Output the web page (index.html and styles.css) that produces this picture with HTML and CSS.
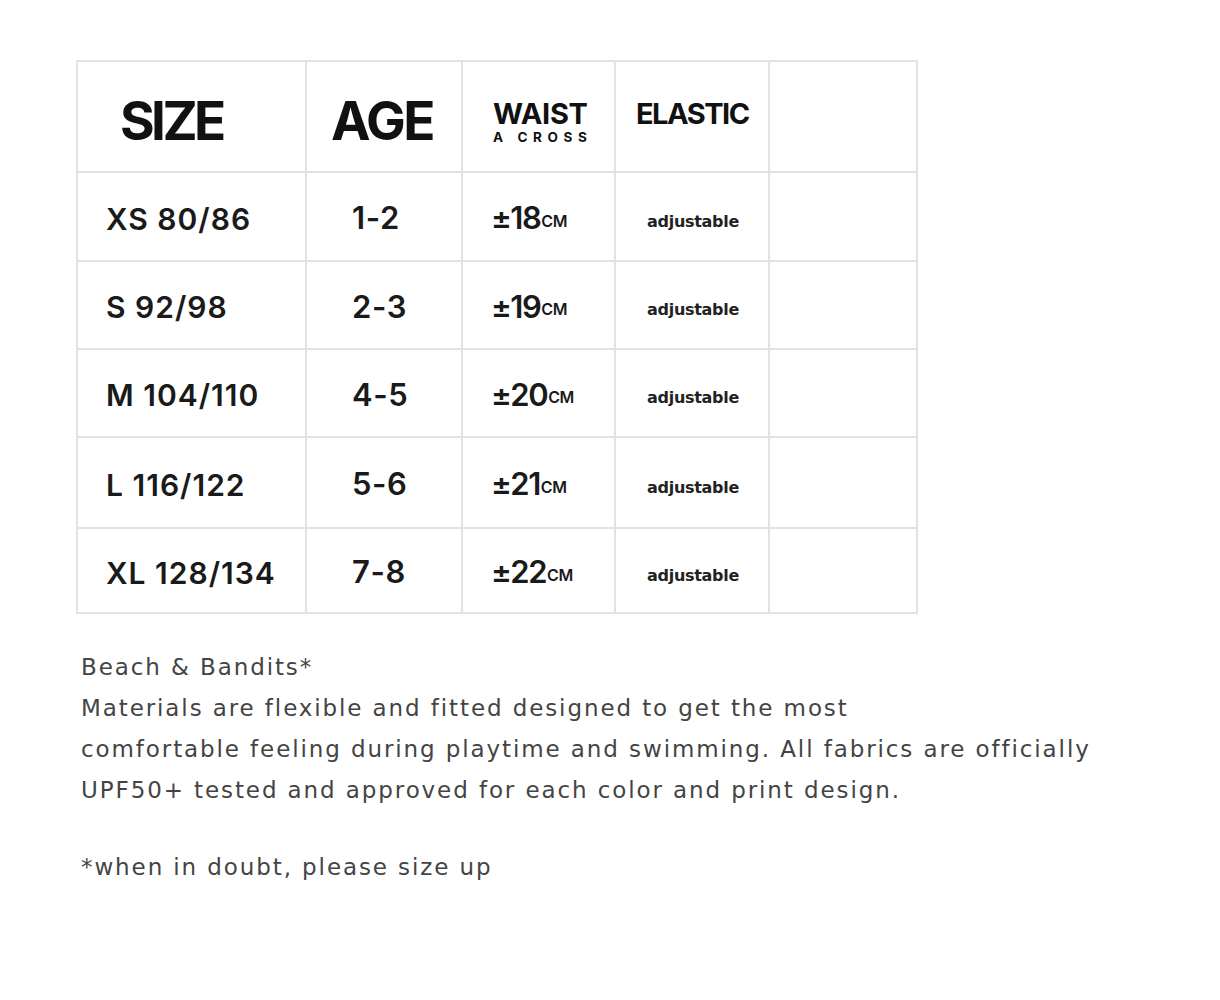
FILE: index.html
```html
<!DOCTYPE html>
<html>
<head>
<meta charset="utf-8">
<link rel="stylesheet" href="styles.css">
</head>
<body>
<div class="page">
  <div class="chart">
    <div class="cell head h-size">SIZE</div>
    <div class="cell head h-age">AGE</div>
    <div class="cell head h-waist"><span class="w1">WAIST</span><span class="w2">A CROSS</span></div>
    <div class="cell head h-elastic">ELASTIC</div>
    <div class="cell head"></div>

    <div class="cell size">XS 80/86</div><div class="cell age">1-2</div><div class="cell waist">±18<span class="cm">CM</span></div><div class="cell adj">adjustable</div><div class="cell"></div>
    <div class="cell size">S 92/98</div><div class="cell age">2-3</div><div class="cell waist">±19<span class="cm">CM</span></div><div class="cell adj">adjustable</div><div class="cell"></div>
    <div class="cell size">M 104/110</div><div class="cell age">4-5</div><div class="cell waist">±20<span class="cm">CM</span></div><div class="cell adj">adjustable</div><div class="cell"></div>
    <div class="cell size">L 116/122</div><div class="cell age">5-6</div><div class="cell waist">±21<span class="cm">CM</span></div><div class="cell adj">adjustable</div><div class="cell"></div>
    <div class="cell size">XL 128/134</div><div class="cell age">7-8</div><div class="cell waist">±22<span class="cm">CM</span></div><div class="cell adj">adjustable</div><div class="cell"></div>
  </div>
  <div class="notes">
    <p>Beach &amp; Bandits*<br>Materials are flexible and fitted designed to get the most<br>comfortable feeling during playtime and swimming. All fabrics are officially<br>UPF50+ tested and approved for each color and print design.</p>
    <p>*when in doubt, please size up</p>
  </div>
</div>
</body>
</html>
```
FILE: styles.css
```css
html, body { margin: 0; padding: 0; background: #fff; }
body { font-family: "Inter", "Open Sans", sans-serif; color: #111; }
.page { padding: 60px 0 0 76px; }
.chart {
  display: grid;
  width: 840px;
  grid-template-columns: 229px 156px 153px 154px 148px;
  grid-template-rows: 111px 89px 88px 88px 91px 85px;
  border-top: 2px solid #e2e2e2;
  border-left: 2px solid #e2e2e2;
}
.cell {
  border-right: 2px solid #e2e2e2;
  border-bottom: 2px solid #e2e2e2;
  display: flex;
  align-items: center;
  color: #1a1a1a;
}
.head { font-weight: 700; color: #111; }
.h-size { font-size: 53px; letter-spacing: -3.6px; padding: 8px 0 0 42px; }
.h-age { font-size: 53px; letter-spacing: -2.4px; padding: 8px 0 0 24px; }
.h-waist { flex-direction: column; align-items: flex-start; justify-content: flex-start; padding: 37px 0 0 30px; line-height: 1; }
.w1 { font-size: 29px; letter-spacing: -0.3px; }
.w2 { font-size: 13.5px; letter-spacing: 5.6px; margin-top: 3px; }
.h-elastic { align-items: flex-start; padding: 37px 0 0 20px; font-size: 29px; letter-spacing: -1.5px; line-height: 1; }
.size { font-size: 30px; font-weight: 600; padding: 4px 0 0 28px; letter-spacing: 1px; }
.age { font-size: 31px; font-weight: 600; padding: 2px 0 0 45px; letter-spacing: 0.6px; }
.waist { font-size: 31px; font-weight: 600; padding: 2px 0 0 28px; letter-spacing: -1.5px; }
.cm { font-size: 16px; letter-spacing: -0.3px; margin-left: 1px; align-self: center; padding-top: 6px; }
.adj { font-family: "DejaVu Sans", sans-serif; font-size: 16px; font-weight: 700; justify-content: center; padding: 9px 0 0 2px; letter-spacing: -0.3px; color: #222; }
.notes { padding: 33px 0 0 5px; color: #444; font-family: "DejaVu Sans", sans-serif; font-size: 23px; line-height: 41px; letter-spacing: 1.9px; }
.notes p { margin: 0 0 36px 0; white-space: nowrap; }
```
